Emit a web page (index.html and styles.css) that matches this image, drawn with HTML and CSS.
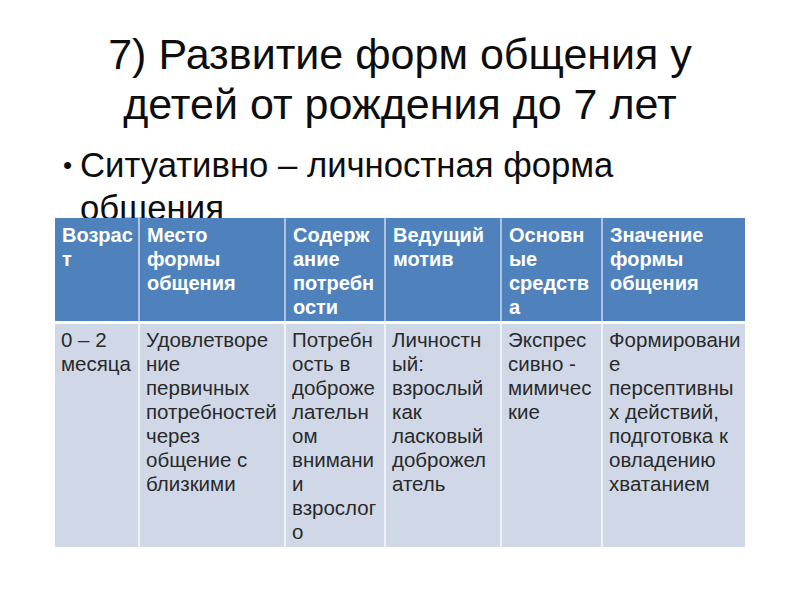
FILE: index.html
```html
<!DOCTYPE html>
<html lang="ru">
<head>
<meta charset="utf-8">
<title>Развитие форм общения</title>
<link rel="stylesheet" href="styles.css">
</head>
<body>
<div class="slide">
  <h1 class="title">7) Развитие форм общения у<br>детей от рождения до 7 лет</h1>
  <ul class="bullets">
    <li>Ситуативно – личностная форма общения</li>
  </ul>
  <table class="grid">
    <colgroup>
      <col class="c1"><col class="c2"><col class="c3"><col class="c4"><col class="c5"><col class="c6">
    </colgroup>
    <thead>
      <tr>
        <th>Возрас<br>т</th>
        <th>Место формы общения</th>
        <th>Содерж<br>ание потребн<br>ости</th>
        <th>Ведущий мотив</th>
        <th>Основн<br>ые средств<br>а</th>
        <th>Значение формы общения</th>
      </tr>
    </thead>
    <tbody>
      <tr>
        <td>0 – 2 месяца</td>
        <td>Удовлетворе<br>ние<br>первичных<br>потребностей<br>через<br>общение с<br>близкими</td>
        <td>Потребн<br>ость в<br>доброже<br>лательн<br>ом<br>внимани<br>и<br>взрослог<br>о</td>
        <td>Личностн<br>ый:<br>взрослый<br>как<br>ласковый<br>доброжел<br>атель</td>
        <td>Экспрес<br>сивно -<br>мимичес<br>кие</td>
        <td>Формировани<br>е<br>персептивны<br>х действий,<br>подготовка к<br>овладению<br>хватанием</td>
      </tr>
    </tbody>
  </table>
</div>
</body>
</html>
```
FILE: styles.css
```css
html, body {
  margin: 0;
  padding: 0;
  background: #ffffff;
}

.slide {
  width: 800px;
  height: 600px;
  overflow: hidden;
  font-family: "Liberation Sans", Arial, sans-serif;
  color: #000;
}

.title {
  margin: 0;
  padding-top: 29px;
  font-size: 43px;
  font-weight: normal;
  line-height: 50px;
  text-align: center;
  color: #0d0d0d;
}

.bullets {
  list-style: none;
  margin: 15px 0 0 0;
  padding: 0 0 0 80px;
  height: 74px;
  overflow: hidden;
  font-size: 34.7px;
  line-height: 43px;
  color: #0d0d0d;
}

.bullets li {
  position: relative;
  width: 600px;
}

.bullets li::before {
  content: "•";
  position: absolute;
  left: -17px;
  top: 0;
  font-size: 26px;
}

.grid {
  margin-left: 55px;
  width: 690px;
  table-layout: fixed;
  border-collapse: collapse;
  line-height: 24px;
}

.c1 { width: 84px; }
.c2 { width: 146px; }
.c3 { width: 100px; }
.c4 { width: 116px; }
.c5 { width: 101px; }
.c6 { width: 143px; }

.grid th,
.grid td {
  text-align: left;
  vertical-align: top;
  overflow-wrap: anywhere;
  padding: 5px 1px 2px 7px;
  border-left: 2px solid #eef1f7;
}

.grid th:first-child,
.grid td:first-child {
  border-left: 0;
}

.grid th {
  background: #4f81bd;
  color: #ffffff;
  font-size: 20px;
  font-weight: bold;
  border-bottom: 3px solid #ffffff;
  border-left-color: #aec3df;
}

.grid td {
  background: #d0d8e8;
  color: #2a2a2a;
  font-size: 20.5px;
  padding-top: 4px;
  padding-bottom: 3px;
  padding-left: 6px;
}
```
